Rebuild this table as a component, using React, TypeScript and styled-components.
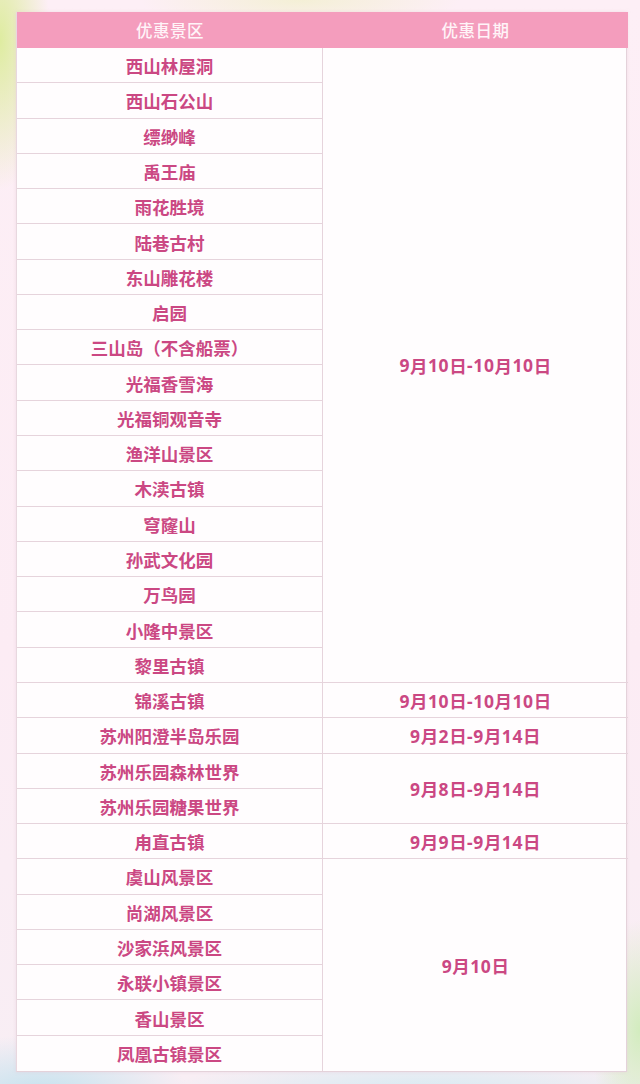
import React from "react";
import styled, { createGlobalStyle } from "styled-components";

const GlobalStyle = createGlobalStyle`
  html, body {
    margin: 0;
    padding: 0;
  }
  body {
    width: 640px;
    height: 1084px;
    overflow: hidden;
    font-family: "Noto Sans CJK SC", "Noto Sans", sans-serif;
  }
`;

const Page = styled.div`
  position: relative;
  width: 640px;
  height: 1084px;
  box-sizing: border-box;
  padding: 12px 13px 0 16px;
  background:
    radial-gradient(ellipse 50px 150px at 0px 40px, rgba(222, 236, 160, 1), rgba(222, 236, 160, 0) 100%),
    radial-gradient(ellipse 160px 30px at 300px 0px, rgba(240, 240, 200, 0.7), rgba(240, 240, 200, 0) 100%),
    radial-gradient(ellipse 50px 110px at 640px 1030px, rgba(210, 236, 190, 1), rgba(210, 236, 190, 0) 100%),
    radial-gradient(ellipse 150px 60px at 40px 1095px, rgba(196, 226, 238, 1), rgba(196, 226, 238, 0) 100%),
    radial-gradient(ellipse 260px 40px at 420px 1095px, rgba(212, 234, 242, 1), rgba(212, 234, 242, 0) 100%),
    linear-gradient(180deg, #fdeff6 0%, #fcecf4 60%, #f8eef4 100%);
`;

const Table = styled.div`
  display: grid;
  grid-template-columns: 306px 305px;
  grid-template-rows: 36px repeat(29, 1fr);
  height: 1060px;
  width: 611px;
  box-sizing: border-box;
  background: #fffdfe;
  border-right: 1px solid #e4d2da;
  border-bottom: 1px solid #e4d2da;
  border-left: 1px solid #e8d8df;
  box-shadow: 0 0 3px rgba(230, 200, 215, 0.5);
`;

const HeadCell = styled.div<{ $col: number }>`
  grid-column: ${(p) => p.$col};
  grid-row: 1;
  display: flex;
  align-items: center;
  justify-content: center;
  background: #f49dbd;
  color: #fff4f8;
  font-size: 16.5px;
  font-weight: 500;
  letter-spacing: 0.5px;
`;

const NameCell = styled.div<{ $row: number; $last: boolean }>`
  grid-column: 1;
  grid-row: ${(p) => p.$row};
  display: flex;
  align-items: center;
  justify-content: center;
  box-sizing: border-box;
  border-right: 1px solid #e6d4dc;
  border-bottom: ${(p) => (p.$last ? "none" : "1px solid #e6d4dc")};
  color: #cb4883;
  font-size: 17.5px;
  font-weight: 700;
  padding-top: 1px;
`;

const DateCell = styled.div<{ $start: number; $span: number; $last: boolean }>`
  grid-column: 2;
  grid-row: ${(p) => `${p.$start} / span ${p.$span}`};
  display: flex;
  align-items: center;
  justify-content: center;
  box-sizing: border-box;
  border-bottom: ${(p) => (p.$last ? "none" : "1px solid #e6d4dc")};
  color: #cb4883;
  font-family: "Noto Sans", "Noto Sans CJK SC", sans-serif;
  font-size: 17.5px;
  font-weight: 700;
  letter-spacing: 0.6px;
  padding-top: 1px;
`;

const DateText = styled.span`
  font-family: "Noto Sans CJK SC", sans-serif;
  letter-spacing: 0.4px;
`;

const names = [
  "西山林屋洞",
  "西山石公山",
  "缥缈峰",
  "禹王庙",
  "雨花胜境",
  "陆巷古村",
  "东山雕花楼",
  "启园",
  "三山岛（不含船票）",
  "光福香雪海",
  "光福铜观音寺",
  "渔洋山景区",
  "木渎古镇",
  "穹窿山",
  "孙武文化园",
  "万鸟园",
  "小隆中景区",
  "黎里古镇",
  "锦溪古镇",
  "苏州阳澄半岛乐园",
  "苏州乐园森林世界",
  "苏州乐园糖果世界",
  "甪直古镇",
  "虞山风景区",
  "尚湖风景区",
  "沙家浜风景区",
  "永联小镇景区",
  "香山景区",
  "凤凰古镇景区",
];

const dates = [
  { from: 0, span: 18, text: "9月10日-10月10日" },
  { from: 18, span: 1, text: "9月10日-10月10日" },
  { from: 19, span: 1, text: "9月2日-9月14日" },
  { from: 20, span: 2, text: "9月8日-9月14日" },
  { from: 22, span: 1, text: "9月9日-9月14日" },
  { from: 23, span: 6, text: "9月10日" },
];

const renderDate = (t: string) =>
  t
    .split(/(\d+|-)/)
    .filter(Boolean)
    .map((part, i) =>
      /^(\d+|-)$/.test(part) ? <span key={i}>{part}</span> : <DateText key={i}>{part}</DateText>
    );

export default function App() {
  return (
    <>
      <GlobalStyle />
      <Page>
        <Table>
          <HeadCell $col={1}>优惠景区</HeadCell>
          <HeadCell $col={2}>优惠日期</HeadCell>
          {names.map((n, i) => (
            <NameCell key={n} $row={i + 2} $last={i === names.length - 1}>
              {n}
            </NameCell>
          ))}
          {dates.map((d, i) => (
            <DateCell key={i} $start={d.from + 2} $span={d.span} $last={i === dates.length - 1}>
              {renderDate(d.text)}
            </DateCell>
          ))}
        </Table>
      </Page>
    </>
  );
}
